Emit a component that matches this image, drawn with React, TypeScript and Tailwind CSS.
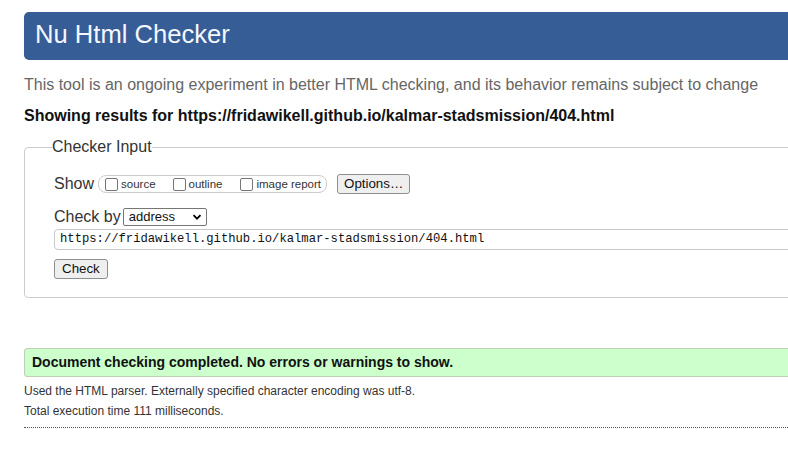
const url = "https://fridawikell.github.io/kalmar-stadsmission/404.html";

const showOptions = [
  { label: "source", gap: "ml-0" },
  { label: "outline", gap: "ml-[17px]" },
  { label: "image report", gap: "ml-[18px]" },
];

function Box() {
  return <span className="inline-block w-[13px] h-[13px] shrink-0 rounded-[2px] border border-[#767676] bg-white" />;
}

export default function App() {
  return (
    <div className="w-[788px] h-[449px] overflow-hidden bg-white font-['Liberation_Sans',Arial,sans-serif] text-[#222]">
      <div className="w-[830px] pl-6 pt-3">
        {/* Title bar */}
        <div className="h-12 flex items-center pb-[3px] pl-[11px] rounded-l-[5px] bg-[#365d96]">
          <h1 className="text-[25.6px] leading-none text-[#f4f7ff]">Nu Html Checker</h1>
        </div>

        <p className="mt-4 text-[16px] leading-[18px] text-[#666]">
          This tool is an ongoing experiment in better HTML checking, and its behavior remains subject to change
        </p>
        <p className="mt-[13px] text-[16px] leading-[18px] font-bold text-[#111]">
          Showing results for {url}
        </p>

        {/* Checker input */}
        <fieldset className="mt-[13px] border border-[#ccc] rounded-[4px] px-[27px] pt-[17px] pb-[17px]">
          <legend className="px-0 text-[16px] leading-[18px] text-[#333]">Checker Input</legend>
          <div className="pl-[2px]">
            <div className="h-[22px] flex items-center">
              <span className="text-[16px] leading-[18px] text-[#333]">Show</span>
              <div className="ml-1 h-[18px] flex items-center pl-[6px] pr-[5px] border border-[#ccc] rounded-[8px] text-[11.5px] text-[#333]">
                {showOptions.map((o) => (
                  <label key={o.label} className={`flex items-center ${o.gap}`}>
                    <Box />
                    <span className="ml-[3px] mt-[2px]">{o.label}</span>
                  </label>
                ))}
              </div>
              <button className="ml-[10px] h-5 px-[6px] text-[13.33px] leading-none text-[#111] bg-[#efefef] border border-[#8f8f8f] rounded-[3px]">
                Options…
              </button>
            </div>

            <div className="mt-3 h-5 flex items-center">
              <span className="text-[16px] leading-[18px] text-[#333]">Check by</span>
              <div className="ml-[2px] w-[84px] h-[18px] flex items-center justify-between pl-[5px] pr-[4px] border border-[#767676] rounded-[2px] bg-white text-[13px] text-[#111]">
                <span>address</span>
                <svg width="10" height="10" viewBox="0 0 10 10">
                  <path d="M1.5 3.2 L5 6.7 L8.5 3.2" fill="none" stroke="#000" strokeWidth="1.8" />
                </svg>
              </div>
            </div>

            <div className="mt-[2px] h-[21px] flex items-center pl-[5px] border border-[#c8c8c8] rounded-[4px] font-['Liberation_Mono',monospace] text-[12.2px] text-[#111]">
              {url}
            </div>

            <button className="mt-[9px] h-5 px-[7px] text-[13.33px] leading-none text-[#111] bg-[#efefef] border border-[#8f8f8f] rounded-[3px]">
              Check
            </button>
          </div>
        </fieldset>

        {/* Result */}
        <div className="mt-[50px] h-[29px] flex items-center pl-[7px] border border-[#bcd0b6] rounded-l-[3px] bg-[#ccffcc]">
          <span className="text-[14px] font-bold text-[#111]">Document checking completed. No errors or warnings to show.</span>
        </div>
        <div className="mt-1 text-[12px] leading-[20px] text-[#333]">
          <p>Used the HTML parser. Externally specified character encoding was utf-8.</p>
          <p>Total execution time 111 milliseconds.</p>
        </div>
        <div className="mt-[6px] border-t border-dotted border-[#555]" />
      </div>
    </div>
  );
}
